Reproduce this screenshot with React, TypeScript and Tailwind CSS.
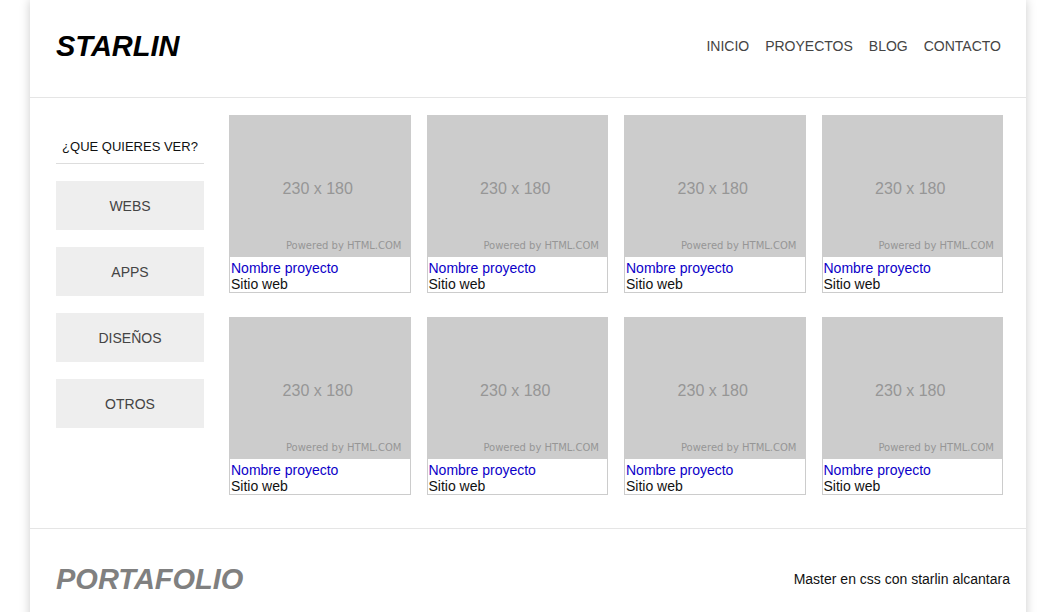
const links = ["INICIO", "PROYECTOS", "BLOG", "CONTACTO"];
const categories = ["WEBS", "APPS", "DISEÑOS", "OTROS"];
const projects = [1, 2, 3, 4, 5, 6, 7, 8];

function ProjectCard() {
  return (
    <article className="border border-[#ccc]">
      <div className="flex h-[141px] flex-col items-center justify-end bg-[#ccc] text-[#969696]">
        <p className="pr-1 pb-[39px] text-base leading-6">230 x 180</p>
        <p className="self-end pr-2 pb-[5px] font-['DejaVu_Sans',sans-serif] text-[10px] leading-3">
          Powered by HTML.COM
        </p>
      </div>
      <div className="px-px pt-[3px] text-sm leading-4">
        <h2>
          <a href="#" className="text-[#0c00c8]">Nombre proyecto</a>
        </h2>
        <p>Sitio web</p>
      </div>
    </article>
  );
}

export default function App() {
  return (
    <div className="mr-[26px] ml-[30px] min-h-screen bg-white font-['Liberation_Sans',Arial,sans-serif] text-[#111] shadow-[0_0_10px_#ccc]">
      <header className="flex h-[98px] items-start justify-between border-b border-[#e5e5e5] pt-7 pr-[25px] pl-[26px]">
        <h1 className="text-[29px] leading-9 font-bold text-black italic">STARLIN</h1>
        <nav className="flex gap-4 text-sm leading-9 text-[#444]">
          {links.map((link) => (
            <a key={link} href="#">{link}</a>
          ))}
        </nav>
      </header>

      <main className="flex items-start gap-[25px] border-b border-[#e5e5e5] pt-[17px] pr-[23px] pb-[33px] pl-[26px]">
        <aside className="w-[148px] shrink-0 pt-[23px]">
          <h2 className="border-b border-[#ddd] pb-[7px] text-center text-[13px] leading-[18px]">
            ¿QUE QUIERES VER?
          </h2>
          <nav className="flex flex-col gap-[17px] pt-[17px] text-sm text-[#444]">
            {categories.map((category) => (
              <a
                key={category}
                href="#"
                className="flex h-[49px] items-center justify-center bg-[#eee]"
              >
                {category}
              </a>
            ))}
          </nav>
        </aside>
        <section className="grid flex-1 grid-cols-4 gap-x-4 gap-y-6">
          {projects.map((project) => (
            <ProjectCard key={project} />
          ))}
        </section>
      </main>

      <footer className="flex items-center justify-between pt-8 pr-4 pb-8 pl-[26px]">
        <p className="text-[29px] leading-9 font-bold text-[#808080] italic">PORTAFOLIO</p>
        <p className="text-sm">Master en css con starlin alcantara</p>
      </footer>
    </div>
  );
}
